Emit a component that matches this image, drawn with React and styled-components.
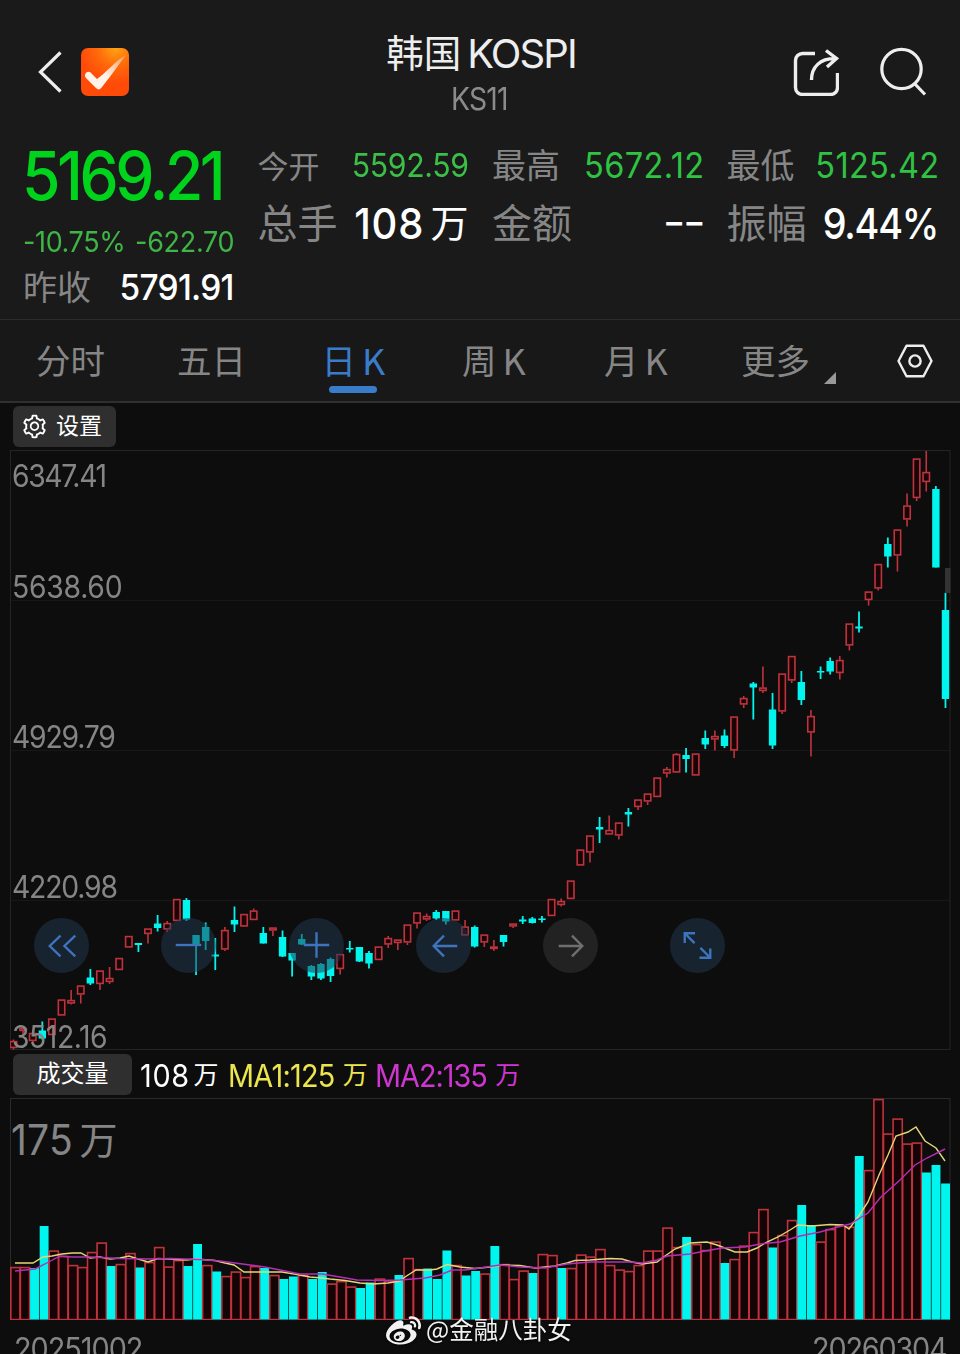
import React from 'react';
import styled, {createGlobalStyle} from 'styled-components';
import {AiOutlineSetting} from 'react-icons/ai';
import {FaWeibo} from 'react-icons/fa';

const RED = '#be343e';
const CYAN = '#00f5ee';

const STEP = 9.608;

// [rising, high, body top, body bottom, low]
const candles = [
    [1, 1039.5, 1041, 1048, 1049.5], [1, 1028, 1028, 1031, 1036], [1, 1031, 1033, 1041, 1042],
    [0, 1021.5, 1030.5, 1038.5, 1039.5], [1, 1018.5, 1018.5, 1035, 1035], [1, 999.5, 999.5, 1015.5, 1015.5],
    [1, 990, 1000, 1003.5, 1004.5], [1, 985.5, 985.5, 994.5, 1003.5], [0, 969, 977.5, 983.5, 985],
    [1, 970.5, 970.5, 984, 990], [1, 967, 978, 982, 984], [1, 958, 958, 970, 970],
    [1, 936, 936, 947.5, 947.5], [0, 943, 943, 945, 952], [1, 928.5, 928.5, 934, 943.5],
    [0, 915, 923.5, 928, 931.5], [1, 921, 923, 929.5, 932], [1, 899, 899, 921, 921],
    [0, 898, 900, 919.5, 921], [0, 935, 935, 945, 975], [0, 922.5, 927, 941, 950],
    [0, 938, 954.5, 956.5, 970], [1, 927, 930, 949.5, 951], [0, 906.5, 920, 924.5, 932],
    [1, 914, 914, 926.5, 927], [1, 908.5, 910.5, 920, 920], [0, 927, 933, 943.5, 943.5],
    [1, 927.5, 927.5, 930.5, 936], [0, 930.5, 937, 956.5, 957], [0, 953, 953, 960.5, 976.5],
    [0, 934, 939, 944.5, 945], [0, 965, 966, 976.5, 980], [0, 963, 964, 978.5, 980],
    [0, 957.5, 959, 976, 982], [1, 954, 954, 969, 974.5], [0, 941, 948, 949.5, 952.5],
    [0, 947, 947, 961.5, 962], [0, 951, 953, 963.5, 968.5], [1, 946.5, 946.5, 960, 960],
    [1, 936, 938, 944.5, 948], [1, 939.5, 939.5, 943, 950], [1, 924.5, 924.5, 942.5, 945],
    [1, 912.5, 912.5, 923.5, 928.5], [1, 913.5, 916, 919.5, 921], [0, 910, 912, 918.5, 920],
    [0, 911, 911, 921.5, 924.5], [1, 910.5, 910.5, 920.5, 920.5], [1, 920, 926.5, 935.5, 935.5],
    [0, 925.5, 927, 946.5, 947.5], [1, 934.5, 934.5, 942.5, 947], [1, 940, 946.5, 949, 951],
    [0, 935, 935, 942, 946.5], [1, 923.5, 923.5, 926.5, 928], [0, 916, 919.5, 921.5, 924],
    [0, 917, 918.5, 923, 923.5], [0, 916, 918.5, 920, 922.5], [1, 899, 899, 916, 916],
    [1, 898.5, 901, 905, 906.5], [1, 880.5, 880.5, 899, 899], [1, 849.5, 849.5, 865.5, 865.5],
    [1, 835.5, 835.5, 852.5, 862.5], [0, 817, 827, 829.5, 843], [1, 815.5, 830, 834.5, 834.5],
    [1, 822.5, 822.5, 835.5, 839.5], [0, 808, 812, 814.5, 826.5], [1, 799.5, 799.5, 807, 810],
    [1, 793.5, 793.5, 801.5, 805], [1, 777.5, 777.5, 797, 797], [1, 767, 769, 773.5, 777.5],
    [1, 753, 754, 772.5, 772.5], [0, 748, 755, 759, 772.5], [1, 753.5, 753.5, 775.5, 775.5],
    [0, 730.5, 738, 744.5, 749], [1, 730.5, 736, 739.5, 750.5], [0, 729.5, 735.5, 746, 748],
    [1, 716.5, 716.5, 750.5, 758], [1, 696, 698, 704.5, 708], [0, 682, 683.5, 687.5, 719.5],
    [1, 666.5, 687.5, 691, 693], [0, 693, 709.5, 745.5, 749], [1, 673.5, 673.5, 711.5, 714],
    [1, 656, 656, 680.5, 683], [0, 671, 682, 700, 705], [1, 710, 716, 732.5, 756.5],
    [0, 666.5, 671, 672.5, 679], [0, 657.5, 661, 671.5, 674.5], [1, 656, 660, 673, 679.5],
    [1, 623.5, 623.5, 645.5, 650.5], [0, 611.5, 626.5, 628.5, 632.5], [1, 591.5, 591.5, 600, 605.5],
    [1, 564, 564, 588.5, 590.5], [0, 537.5, 544, 556.5, 567.5], [1, 529.5, 529.5, 555.5, 571.5],
    [1, 493.5, 505.5, 519.5, 526.5], [1, 458.5, 458.5, 498, 501], [1, 451, 472, 482, 491.5],
    [0, 486, 489, 567.5, 567.5], [0, 593, 610, 699, 708],
];

// top edge of every volume bar
const volumes = [
    1267, 1267, 1268, 1226, 1250.5, 1256, 1265, 1267, 1252, 1242.5, 1266, 1264, 1253, 1267.5,
    1262, 1247, 1266.5, 1260, 1266, 1244, 1265, 1271.5, 1276, 1271.5, 1277, 1266, 1268, 1275,
    1279, 1276.5, 1275, 1279, 1272, 1283.5, 1281, 1286.5, 1288, 1282.5, 1278.5, 1280.5, 1275,
    1258, 1269, 1268.5, 1279, 1250.5, 1265, 1275.5, 1271, 1273.5, 1246, 1264, 1279, 1270.5,
    1273, 1254, 1255, 1268, 1268, 1254.5, 1256.5, 1249, 1265, 1269.5, 1271, 1265, 1250.5,
    1250.5, 1227.5, 1247, 1237, 1244, 1250, 1241.5, 1263, 1259, 1245.5, 1232, 1209, 1247.5,
    1235, 1220, 1205, 1225, 1241.5, 1229, 1225, 1226.5, 1156, 1170, 1099, 1133.5, 1118.5,
    1143.5, 1142.5, 1172.5, 1165, 1183.5,
];

const fallingVolumes = [
    2, 3, 10, 13, 18, 19, 21, 26, 28, 29, 31, 32, 36, 37, 40, 43, 44, 45, 47, 48, 50, 54, 57,
    70, 74, 79, 82, 83, 88, 95, 96, 97,
];

const ma1 = '15,1263 33,1263 43,1257 52,1256 62,1254 72,1253 81,1253 90,1258 100,1257 110,1259 120,1258 129,1256 138,1259 148,1262 158,1258.5 168,1259 186,1260 196,1259 215,1260.5 225,1263 234,1265 244,1272 263,1272 282,1272 300,1275 310,1277 322,1278 330,1279 345,1280.5 360,1283 373,1284 388,1283 400,1281 405,1277 416,1270 430,1270 437,1269 447,1264.5 460,1267 475,1268.5 490,1267 503,1265 520,1265.5 535,1268 555,1266 567,1263 575,1260.5 590,1260 610,1258.5 622,1259 632,1262 642,1264 657,1262 665,1256 675,1249 690,1243 707,1242 717,1245 735,1252 747,1252 757,1248 767,1242 778,1237 790,1230 798,1225 812,1226 830,1224.5 843,1225 849,1229 858,1217 868,1202 879,1175 888,1155 896,1136 908,1132 916,1127 925,1141 936,1148 945,1161';
const ma2 = '15,1271 25,1270 35,1269 45,1264 60,1256 72,1257 90,1257 120,1258.5 150,1259 170,1258.5 200,1259.5 220,1261 235,1263 250,1265 265,1267 285,1271 300,1274 322,1274 340,1277 357,1280 380,1280.5 400,1280 425,1278 440,1275 452,1270 465,1270 480,1268 500,1265 520,1267 545,1268 567,1264 590,1262 610,1262 630,1262 642,1263 657,1260 667,1256 690,1254 705,1251 722,1248 745,1247 760,1244 780,1242 800,1236 820,1232 838,1227 850,1224 860,1218 868,1213 880,1198 900,1180 915,1165 927,1158 945,1149';

const priceLabels = [
    {text: '6347.41', top: 9, spacing: -1.5},
    {text: '5638.60', top: 120, spacing: -0.3},
    {text: '4929.79', top: 270, spacing: -1.3},
    {text: '4220.98', top: 420, spacing: -1.3},
    {text: '3512.16', top: 570, spacing: -0.5},
];

export default function App() {
    return (
        <Screen>
            <GlobalStyle />
            <Header />
            <Quote />
            <PeriodTabs />
            <Toolbar>
                <SettingButton>
                    <AiOutlineSetting size={27} />
                    <Han $size={23} $color="#fff">设置</Han>
                </SettingButton>
            </Toolbar>
            <PriceChart />
            <VolumeBar />
            <VolumeChart />
            <Footer>
                <Num $size={31} $ls={-1.1}>20251002</Num>
                <Num $size={31} $ls={-1.3} $right>20260304</Num>
                <Watermark>
                    <FaWeibo size={35} />
                    <Han $size={24.5} $color="#f2f2f2">@金融八卦女</Han>
                </Watermark>
            </Footer>
        </Screen>
    )
}

function Header() {
    return (
        <HeaderBar>
            <HeaderSide>
                <svg width="24" height="42" viewBox="0 0 24 42" fill="none" stroke="#eee" strokeWidth="3.2">
                    <path d="M22.5 1.5 2.5 21 22.5 40.5" />
                </svg>
                <AppLogo viewBox="0 0 48 48">
                    <defs>
                        <radialGradient id="logo" cx="0.72" cy="0" r="0.75">
                            <stop offset="0" stopColor="#ffa411" />
                            <stop offset="0.5" stopColor="#ff6a0c" />
                            <stop offset="1" stopColor="#ff4a08" />
                        </radialGradient>
                        <linearGradient id="tick" x1="0" y1="1" x2="1" y2="0">
                            <stop offset="0.45" stopColor="#fff3ea" />
                            <stop offset="1" stopColor="#ff9a50" />
                        </linearGradient>
                    </defs>
                    <rect width="48" height="48" rx="7" fill="url(#logo)" />
                    <path d="M4 27c1-4 5-4 7-1l5 5C25 25 33 14 45 7 37 17 30 28 21 39c-2 3-4 3-6 1L5 30c-1-1-1-2-1-3z" fill="url(#tick)" />
                </AppLogo>
            </HeaderSide>
            <TitleBox>
                <Title>
                    <Han $size={37.5} $color="#eee">韩国</Han>
                    <Num $size={40} $ls={-1.9} $sx={1}>KOSPI</Num>
                </Title>
                <Num $size={30.5} $ls={-0.9} $color="#8b8b8b">KS11</Num>
            </TitleBox>
            <HeaderSide $end>
                <svg width="46" height="48" viewBox="0 0 46 48" fill="none" stroke="#eee" strokeWidth="3.4">
                    <path d="M22 5.5H9.5a7 7 0 0 0-7 7v27a7 7 0 0 0 7 7h28a7 7 0 0 0 7-7V25" />
                    <path d="M18.5 32C18.5 19 27 10.5 42 10.5M33 2.5l10.5 8L34 19" />
                </svg>
                <svg width="48" height="50" viewBox="0 0 48 50" fill="none" stroke="#eee" strokeWidth="3.2">
                    <circle cx="22.5" cy="22" r="19.7" />
                    <path d="M35 36 46 47.5" />
                </svg>
            </HeaderSide>
        </HeaderBar>
    )
}

function Quote() {
    return (
        <QuoteGrid>
            <PriceCell>
                <Price $size={67} $weight={500} $ls={-3.7} $color="#00d31c">5169.21</Price>
                <Changes>
                    <Num $size={29} $ls={-0.4} $color="#3fb548">-10.75%</Num>
                    <Num $size={29} $ls={-0.3} $color="#3fb548">-622.70</Num>
                </Changes>
                <Pair>
                    <Han $size={34}>昨收</Han>
                    <Num $size={36} $ls={-0.8} $color="#fff" $weight={500} $right>5791.91</Num>
                </Pair>
            </PriceCell>
            <QuoteCell>
                <Pair>
                    <Han $size={31}>今开</Han>
                    <Num $size={32.5} $ls={-0.4} $color="#3cbf48" $right>5592.59</Num>
                </Pair>
                <Pair>
                    <Han $size={40}>总手</Han>
                    <Amount>
                        <Num $size={43} $ls={0.8} $color="#fff" $weight={500} $right>108</Num>
                        <Han $size={38} $color="#fff">万</Han>
                    </Amount>
                </Pair>
            </QuoteCell>
            <QuoteCell>
                <Pair>
                    <Han $size={34}>最高</Han>
                    <Num $size={35} $ls={0.4} $color="#2fc243" $right>5672.12</Num>
                </Pair>
                <Pair>
                    <Han $size={40}>金额</Han>
                    <Dashes $size={43} $sx={1.15} $ls={-2} $color="#fff" $right>--</Dashes>
                </Pair>
            </QuoteCell>
            <QuoteCell>
                <Pair>
                    <Han $size={34}>最低</Han>
                    <Num $size={35} $ls={0.3} $color="#2fc243" $right>5125.42</Num>
                </Pair>
                <Pair>
                    <Han $size={40}>振幅</Han>
                    <Num $size={43} $ls={-1.4} $sx={0.88} $color="#fff" $weight={500} $right>9.44%</Num>
                </Pair>
            </QuoteCell>
        </QuoteGrid>
    )
}

function PeriodTabs() {
    return (
        <Tabs>
            <Tab>分时</Tab>
            <Tab>五日</Tab>
            <Tab $active $shift={2}>日<Letter>K</Letter></Tab>
            <Tab $shift={1}>周<Letter>K</Letter></Tab>
            <Tab $shift={3}>月<Letter>K</Letter></Tab>
            <Tab>更多<Corner /></Tab>
            <TabIcon>
                <svg width="36" height="34" viewBox="0 0 36 34" fill="none" stroke="#eee" strokeWidth="2.4">
                    <path d="M9.5 1.7h17L34.5 17l-8 15.3h-17L1.5 17z" strokeLinejoin="round" />
                    <circle cx="18" cy="17" r="5.6" />
                </svg>
            </TabIcon>
        </Tabs>
    )
}

function PriceChart() {
    return (
        <PricePane>
            <svg width="941" height="600" viewBox="10 450 941 600">
                <path d="M10 600.5H950M10 750.5H950M10 900.5H950" stroke="#171717" />
                <rect x="10.5" y="450.5" width="939.5" height="599" fill="none" stroke="#242424" />
                <rect x="945" y="568" width="5.5" height="25" fill="#333" />
                {candles.map(([up, high, top, bottom, low], i) => {
                    const x = 13.5 + i * STEP;
                    return up ? (
                        <g key={i} stroke={RED} strokeWidth="1.6" fill="#1a0406">
                            <path d={`M${x} ${high}V${top}M${x} ${bottom}V${low}`} />
                            <rect x={x - 3.2} y={top + 0.6} width="6.4" height={Math.max(bottom - top - 1.2, 1)} />
                        </g>
                    ) : (
                        <g key={i} fill={CYAN}>
                            <rect x={x - 0.9} y={high} width="1.8" height={low - high} />
                            <rect x={x - 3.7} y={top} width="7.4" height={bottom - top} />
                        </g>
                    );
                })}
            </svg>
            {priceLabels.map(({text, top, spacing}) => (
                <PriceLabel key={text} $top={top}>
                    <Num $size={30.5} $ls={spacing} $color="#858585">{text}</Num>
                </PriceLabel>
            ))}
            <Controls>
                <Control><path d="M27 18 16 28.5l11 10.5M42 18 31 28.5l11 10.5" /></Control>
                <Control><path d="M15 27.5h26" /></Control>
                <Control><path d="M15 27.5h26M28 14.5v26" /></Control>
                <Control><path d="M42 28.5H18M28.5 18 18 28.5 28.5 39" /></Control>
                <Control $off><path d="M16 28.5h24M29.5 18 40 28.5 29.5 39" /></Control>
                <Control><path d="M15 25.5V15.5h10.5M15.5 16l9.5 9.5M41 31v9.5H30M40.5 40 31 30.5" /></Control>
            </Controls>
        </PricePane>
    )
}

function Control({children, $off}) {
    return (
        <Round $off={$off}>
            <svg width="55" height="55" viewBox="0 0 56 56" fill="none" stroke="currentColor" strokeWidth="2.4">
                {children}
            </svg>
        </Round>
    )
}

function VolumeBar() {
    return (
        <VolumeInfo>
            <VolumeButton>
                <Han $size={24} $color="#fff">成交量</Han>
            </VolumeButton>
            <Legend $width={88}>
                <Num $size={31} $ls={0.7} $color="#fff">108</Num>
                <Han $size={25} $color="#fff">万</Han>
            </Legend>
            <Legend $width={147}>
                <Num $size={31} $ls={-0.8} $color="#ece64e">MA1:125</Num>
                <Han $size={25} $color="#ece64e">万</Han>
            </Legend>
            <Legend $width={142}>
                <Num $size={31} $ls={-1.1} $color="#cf35cf">MA2:135</Num>
                <Han $size={25} $color="#cf35cf">万</Han>
            </Legend>
        </VolumeInfo>
    )
}

function VolumeChart() {
    return (
        <VolumePane>
            <svg width="941" height="222" viewBox="10 1098 941 222">
                <rect x="10.5" y="1098.5" width="939.5" height="221" fill="none" stroke="#2b2b2b" />
                {volumes.map((top, i) => {
                    const x = 10.6 + i * 9.59;
                    return fallingVolumes.includes(i) ? (
                        <rect key={i} x={x + 0.3} y={top} width="8.9" height={1319.5 - top} fill={CYAN} />
                    ) : (
                        <rect key={i} x={x + 0.2} y={top + 0.6} width="9.2" height={1319 - top} fill="#150405" stroke={RED} strokeWidth="1.6" />
                    );
                })}
                <polyline points={ma1} fill="none" stroke="#e3d676" strokeWidth="1.4" />
                <polyline points={ma2} fill="none" stroke="#b42fb4" strokeWidth="1.4" />
            </svg>
            <VolumeLabel>
                <Num $size={42} $ls={0.2} $color="#858585">175</Num>
                <Han $size={38} $color="#858585">万</Han>
            </VolumeLabel>
        </VolumePane>
    )
}

const GlobalStyle = createGlobalStyle`
    * {
        box-sizing: border-box;
    }
    body {
        margin: 0;
        background: #0d0d0d;
    }
    svg {
        display: block;
        flex-shrink: 0;
    }
`;

const Screen = styled.div`
    display: flex;
    flex-direction: column;
    width: 960px;
    height: 1354px;
    overflow: hidden;
    background: #0d0d0d;
    color: #eee;
    font-family: Inter, "Noto Sans CJK SC", sans-serif;
`;

/* slightly condensed figures */
const Num = styled.span`
    font-family: Inter, "Noto Sans", sans-serif;
    font-size: ${p => p.$size}px;
    font-weight: ${p => p.$weight || 400};
    line-height: 1;
    letter-spacing: ${p => p.$ls || 0}px;
    margin-right: ${p => p.$right && p.$ls > 0 ? -1.5 : 0}px;
    color: ${p => p.$color || 'inherit'};
    white-space: nowrap;
    transform: translateY(${p => p.$size > 34 && p.$size !== 40 ? -1 : 0}px) scaleX(${p => p.$sx || 0.93});
    transform-origin: ${p => p.$right ? 'right' : 'left'} center;
`;

const Han = styled.span`
    font-family: "Noto Sans CJK SC", sans-serif;
    font-size: ${p => p.$size}px;
    font-weight: 400;
    line-height: 1;
    color: ${p => p.$color || '#868686'};
    white-space: nowrap;
    transform: translateY(-0.07em);
`;

const HeaderBar = styled.header`
    display: grid;
    grid-template-columns: 1fr auto 1fr;
    height: 140px;
    padding: 0 33px 0 38px;
    background: #1a1a1a;
`;

const HeaderSide = styled.div`
    display: flex;
    align-items: center;
    justify-content: ${p => p.$end ? 'flex-end' : 'flex-start'};
    gap: ${p => p.$end ? 40 : 19}px;
    height: 144px;
`;

const AppLogo = styled.svg`
    width: 48px;
    height: 48px;
`;

const TitleBox = styled.div`
    display: flex;
    flex-direction: column;
    align-items: center;
    padding: 32px 3px 0 0;
`;

const Title = styled.h1`
    display: flex;
    align-items: center;
    gap: 6px;
    height: 44px;
    margin: 0 0 8px;
`;

const QuoteGrid = styled.section`
    display: grid;
    grid-template-columns: repeat(4, 211px);
    column-gap: 23.5px;
    height: 180px;
    padding-left: 23px;
    border-bottom: 1px solid #2c2c2c;
    background: #1a1a1a;
`;

const PriceCell = styled.div`
    display: grid;
    grid-template-rows: 76px 50px 44px;
    grid-template-columns: 211px;
    align-items: center;
`;

const QuoteCell = styled.div`
    display: grid;
    grid-template-rows: 52px 64px;
    align-items: center;
`;

const Pair = styled.div`
    display: flex;
    align-items: center;
    justify-content: space-between;
`;

const Changes = styled.div`
    display: grid;
    grid-template-columns: 112px 99px;
    align-items: center;
`;

const Amount = styled.div`
    display: flex;
    align-items: center;
    gap: 8px;
`;

const Price = styled(Num)`
    margin: -3px 0 0 -1px;
`;

const Dashes = styled(Num)`
    margin: 0 -1px 4px 0;
`;

const Tabs = styled.nav`
    display: grid;
    grid-template-columns: repeat(6, 141px) 1fr;
    height: 83px;
    border-bottom: 2px solid #2f2f2f;
    background: #181818;
`;

const Tab = styled.div`
    display: flex;
    position: relative;
    align-items: center;
    justify-content: center;
    gap: 6px;
    padding: 0 0 4px ${p => p.$shift || 0}px;
    font-family: "Noto Sans CJK SC", sans-serif;
    font-size: 34.5px;
    font-weight: 400;
    color: ${p => p.$active ? '#3a7cc9' : '#868686'};
    &::after {
        content: '';
        display: ${p => p.$active ? 'block' : 'none'};
        position: absolute;
        bottom: 8px;
        left: 47px;
        width: 48px;
        height: 7px;
        border-radius: 4px;
        background: #3a7cc9;
    }
`;

const Letter = styled.span`
    font-size: 36px;
    font-weight: 400;
`;

const Corner = styled.i`
    position: absolute;
    right: 10px;
    bottom: 17px;
    border-bottom: 12px solid #999;
    border-left: 12px solid transparent;
`;

const TabIcon = styled.div`
    display: flex;
    align-items: center;
    padding-left: 51px;
`;

const Toolbar = styled.div`
    height: 47px;
    padding: 3px 13px;
`;

const SettingButton = styled.div`
    display: flex;
    align-items: center;
    gap: 8px;
    width: 103px;
    height: 41px;
    padding-left: 8px;
    border-radius: 6px;
    background: #2f2f2f;
    color: #fff;
`;

const PricePane = styled.div`
    position: relative;
    height: 600px;
    padding-left: 10px;
`;

const PriceLabel = styled.div`
    position: absolute;
    top: ${p => p.$top}px;
    left: 12px;
    height: 34px;
    display: flex;
    align-items: center;
`;

const Controls = styled.div`
    display: flex;
    position: absolute;
    top: 468px;
    left: 34px;
    gap: 72.3px;
`;

const Round = styled.div`
    width: 55px;
    height: 55px;
    border-radius: 50%;
    background: ${p => p.$off ? 'rgba(52, 52, 52, 0.55)' : 'rgba(35, 55, 80, 0.52)'};
    color: ${p => p.$off ? '#6f6f6f' : '#3d74bd'};
`;

const VolumeInfo = styled.div`
    display: flex;
    align-items: center;
    height: 48px;
    padding-left: 13px;
`;

const VolumeButton = styled.div`
    display: flex;
    align-items: center;
    justify-content: center;
    width: 119px;
    height: 41px;
    margin-right: 8px;
    border-radius: 6px;
    background: #2f2f2f;
`;

const Legend = styled.div`
    display: flex;
    align-items: center;
    justify-content: space-between;
    width: ${p => p.$width}px;
    padding: 3px 11px 0 0;
    &:last-child {
        padding-right: 0;
    }
`;

const VolumePane = styled.div`
    position: relative;
    height: 222px;
    padding-left: 10px;
`;

const VolumeLabel = styled.div`
    display: flex;
    position: absolute;
    top: 22px;
    left: 11px;
    align-items: center;
    gap: 2px;
`;

const Footer = styled.footer`
    display: flex;
    position: relative;
    justify-content: space-between;
    height: 34px;
    padding: 13px 14px 0 14px;
    color: #858585;
`;

const Watermark = styled.div`
    display: flex;
    position: absolute;
    top: -6px;
    left: 386px;
    align-items: center;
    gap: 5px;
    color: #f2f2f2;
    filter: drop-shadow(0 1px 1px rgba(0, 0, 0, 0.7));
`;
